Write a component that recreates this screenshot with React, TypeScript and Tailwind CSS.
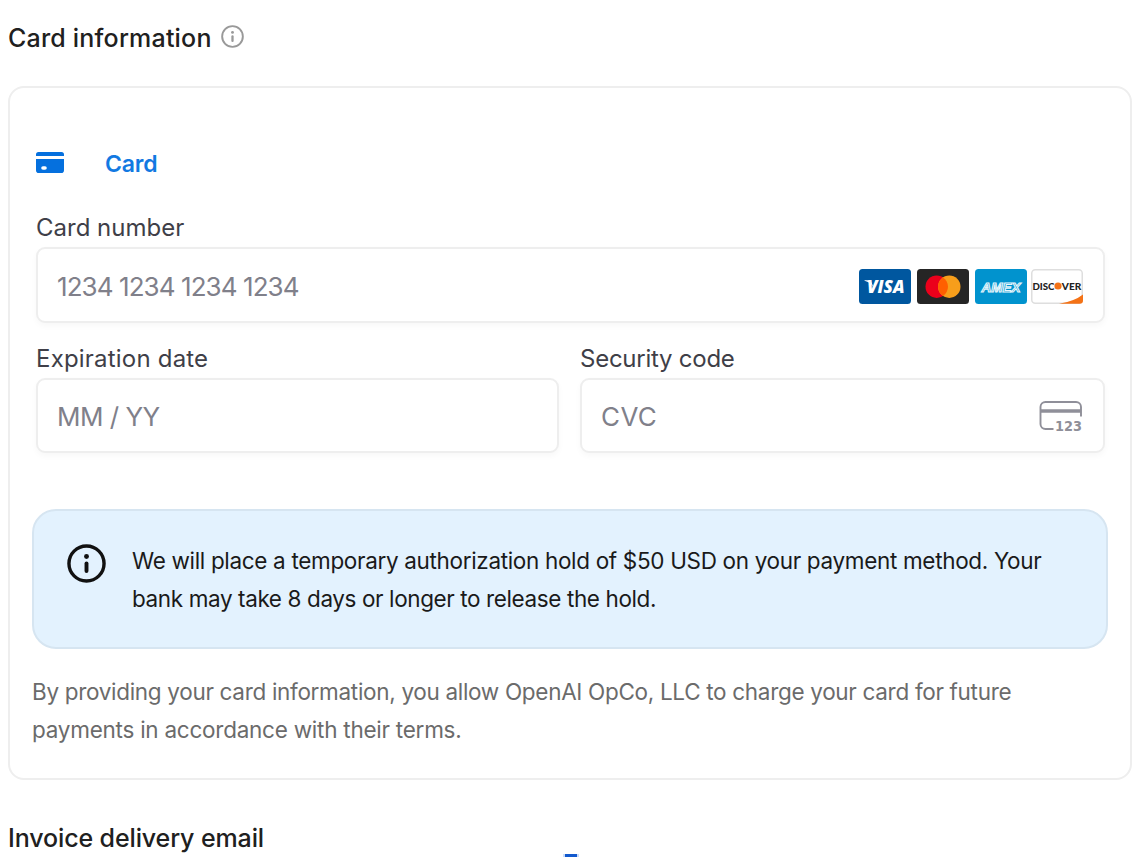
import React from "react";

const InfoIcon: React.FC<{ className?: string; stroke?: number }> = ({ className, stroke = 2 }) => (
  <svg viewBox="0 0 24 24" fill="none" className={className}>
    <circle cx="12" cy="12" r="10.8" stroke="currentColor" strokeWidth={stroke} />
    <circle cx="12" cy="7.7" r="1.5" fill="currentColor" />
    <path d="M12 12v4.6" stroke="currentColor" strokeWidth="2.4" strokeLinecap="round" />
  </svg>
);

const CardIcon: React.FC = () => (
  <svg viewBox="0 0 28 22" className="w-7 h-[22px]" fill="#0570de">
    <path d="M2.5 0h23A2.5 2.5 0 0 1 28 2.5V4H0V2.5A2.5 2.5 0 0 1 2.5 0Z" />
    <path
      fillRule="evenodd"
      d="M0 7h28v11.2A2.8 2.8 0 0 1 25.2 21H2.8A2.8 2.8 0 0 1 0 18.2ZM7 14.2a1.8 1.8 0 0 0 0 3.6h2a1.8 1.8 0 0 0 0-3.6Z"
    />
  </svg>
);

const VisaIcon: React.FC = () => (
  <svg viewBox="0 0 52 35" className="w-[52px] h-[35px]">
    <rect width="52" height="35" rx="3.5" fill="#00579f" />
    <text
      x="8"
      y="23.7"
      textLength="37.5"
      lengthAdjust="spacingAndGlyphs"
      fill="#fff"
      fontFamily="Open Sans, sans-serif"
      fontStyle="italic"
      fontWeight="800"
      fontSize="17"
    >
      VISA
    </text>
    <path d="M5.5 11.3h6l3 7c-2-3.5-5-5.5-9-6.5Z" fill="#fff" />
  </svg>
);

const MastercardIcon: React.FC = () => (
  <svg viewBox="0 0 52 35" className="w-[52px] h-[35px]">
    <rect width="52" height="35" rx="3.5" fill="#252525" />
    <circle cx="19.7" cy="17.7" r="11.2" fill="#eb001b" />
    <circle cx="32.3" cy="17.7" r="11.2" fill="#f79e1b" />
    <path d="M26 8.4a11.2 11.2 0 0 1 0 18.6a11.2 11.2 0 0 1 0-18.6Z" fill="#ff5f00" />
  </svg>
);

const AmexIcon: React.FC = () => (
  <svg viewBox="0 0 52 35" className="w-[52px] h-[35px]">
    <rect width="52" height="35" rx="3.5" fill="#0193ce" />
    <text
      x="6.5"
      y="22.5"
      textLength="39"
      lengthAdjust="spacingAndGlyphs"
      fill="#0193ce"
      stroke="#e8f6fc"
      strokeWidth="1.1"
      fontFamily="Liberation Sans, sans-serif"
      fontStyle="italic"
      fontWeight="700"
      fontSize="13.5"
    >
      AMEX
    </text>
  </svg>
);

const DiscoverIcon: React.FC = () => (
  <svg viewBox="0 0 52 35" className="w-[52px] h-[35px] -ml-[2px]">
    <rect x="0.75" y="0.75" width="50.5" height="33.5" rx="3.5" fill="#fff" stroke="#dedede" strokeWidth="1.5" />
    <path d="M28 34.8Q43 32.5 52 25.5V31.5Q52 34.8 48.5 34.8Z" fill="#f47216" />
    <g fill="#222" fontFamily="Lato, sans-serif" fontWeight="900" fontSize="10">
      <text x="1.5" y="20.5" textLength="22" lengthAdjust="spacingAndGlyphs">
        DISC
      </text>
      <text x="30.8" y="20.5" textLength="19.5" lengthAdjust="spacingAndGlyphs">
        VER
      </text>
    </g>
    <circle cx="27" cy="17" r="3.6" fill="#f47216" />
  </svg>
);

const CvcIcon: React.FC = () => (
  <svg viewBox="0 0 44 32" className="w-11 h-8 overflow-visible" fill="none" stroke="#8f8f99">
    <path d="M14.5 28H6.5a5 5 0 0 1-5-5V6a5 5 0 0 1 5-5h30.500a5 5 0 0 1 5 5V15.5" strokeWidth="1.9" />
    <path d="M1.500 10h40.500" strokeWidth="3.6" />
    <text
      x="16"
      y="29.500"
      textLength="27"
      lengthAdjust="spacingAndGlyphs"
      fill="#8f8f99"
      stroke="none"
      fontFamily="DejaVu Sans, sans-serif"
      fontWeight="700"
      fontSize="14.5"
    >
      123
    </text>
  </svg>
);

const labelClass = "h-[30px] pt-px flex items-center text-[24px] text-[#3f3f48]";
const inputClass =
  "w-full h-full pl-[19px] text-[26px] bg-white border-2 border-[#eeeeee] rounded-[9px] shadow-[0_3px_6px_rgba(0,0,0,0.03)] outline-none placeholder:text-[#80808a]";

const App: React.FC = () => {
  return (
    <div className="h-[857px] overflow-hidden bg-white pl-2 pr-[5px] pt-5 font-['Inter',sans-serif]">
      <div className="flex items-center h-9">
        <h2 className="pt-[2px] text-[25px] font-medium text-[#202020] whitespace-nowrap tracking-[0.2px]">
          Card information
        </h2>
        <InfoIcon className="w-[23px] h-[23px] ml-[9px] -mt-1 text-[#999]" />
      </div>

      <section className="mt-[30px] h-[694px] border-2 border-[#eeeeee] rounded-[16px] px-[22px] pt-16">
        <div className="pl-1 pr-[3px]">
          <div className="flex items-center h-[22px]">
            <CardIcon />
            <span className="ml-[41px] mt-[2px] text-[23px] font-semibold tracking-[-0.2px] text-[#1279e2]">Card</span>
          </div>
          <label className={`${labelClass} mt-[38px]`}>
            <span>Card number</span>
          </label>
          <div className="relative mt-[5px] h-[76px]">
            <input className={`${inputClass} pt-[3px] pr-[260px] tracking-[-0.92px]`} placeholder="1234 1234 1234 1234" />
            <div className="absolute right-[22.5px] top-[21.5px] flex gap-[6px]">
              <VisaIcon />
              <MastercardIcon />
              <AmexIcon />
              <DiscoverIcon />
            </div>
          </div>
          <div className="grid grid-cols-[523px_1fr] gap-[21px] mt-5">
            <div>
              <label className={`${labelClass} tracking-[0.2px]`}>
                <span>Expiration date</span>
              </label>
              <div className="mt-[5px] h-[75px]">
                <input className={`${inputClass} pt-px pr-5 tracking-[-0.5px]`} placeholder="MM / YY" />
              </div>
            </div>
            <div>
              <label className={`${labelClass} tracking-[-0.25px]`}>
                <span>Security code</span>
              </label>
              <div className="relative mt-[5px] h-[75px]">
                <input className={`${inputClass} pt-px pr-[80px] tracking-[0.4px]`} placeholder="CVC" />
                <div className="absolute right-[22px] top-[23px]">
                  <CvcIcon />
                </div>
              </div>
            </div>
          </div>
        </div>

        <div className="flex mt-14 h-[140px] w-[1076px] rounded-[24px] border-2 border-[#d6e5f1] bg-[#e3f2fe] pl-[33px]">
          <InfoIcon className="w-[39px] h-[39px] mt-[33px] shrink-0 text-[#111]" stroke={2.1} />
          <p className="ml-[26px] mt-[31px] text-[22.5px] leading-[38px] text-[#1a1a1a] whitespace-nowrap">
            <span className="tracking-[-0.33px]">
              We will place a temporary authorization hold of $50 USD on your payment method. Your
            </span>
            <br />
            <span className="tracking-[-0.39px]">bank may take 8 days or longer to release the hold.</span>
          </p>
        </div>

        <p className="mt-[24px] text-[22.5px] leading-[38px] text-[#6b6b6b] whitespace-nowrap">
          <span className="tracking-[-0.31px]">
            By providing your card information, you allow OpenAI OpCo, LLC to charge your card for future
          </span>
          <br />
          <span className="tracking-[-0.25px]">payments in accordance with their terms.</span>
        </p>
      </section>

      <h2 className="mt-[40px] h-[34px] leading-[37px] text-[25px] font-medium tracking-[-0.12px] text-[#202020] whitespace-nowrap">
        Invoice delivery email
      </h2>
      <div className="ml-[555px] w-4 h-[3px] border-x-2 border-[#c9dcfa] bg-[#1259ce]" />
    </div>
  );
};

export default App;
